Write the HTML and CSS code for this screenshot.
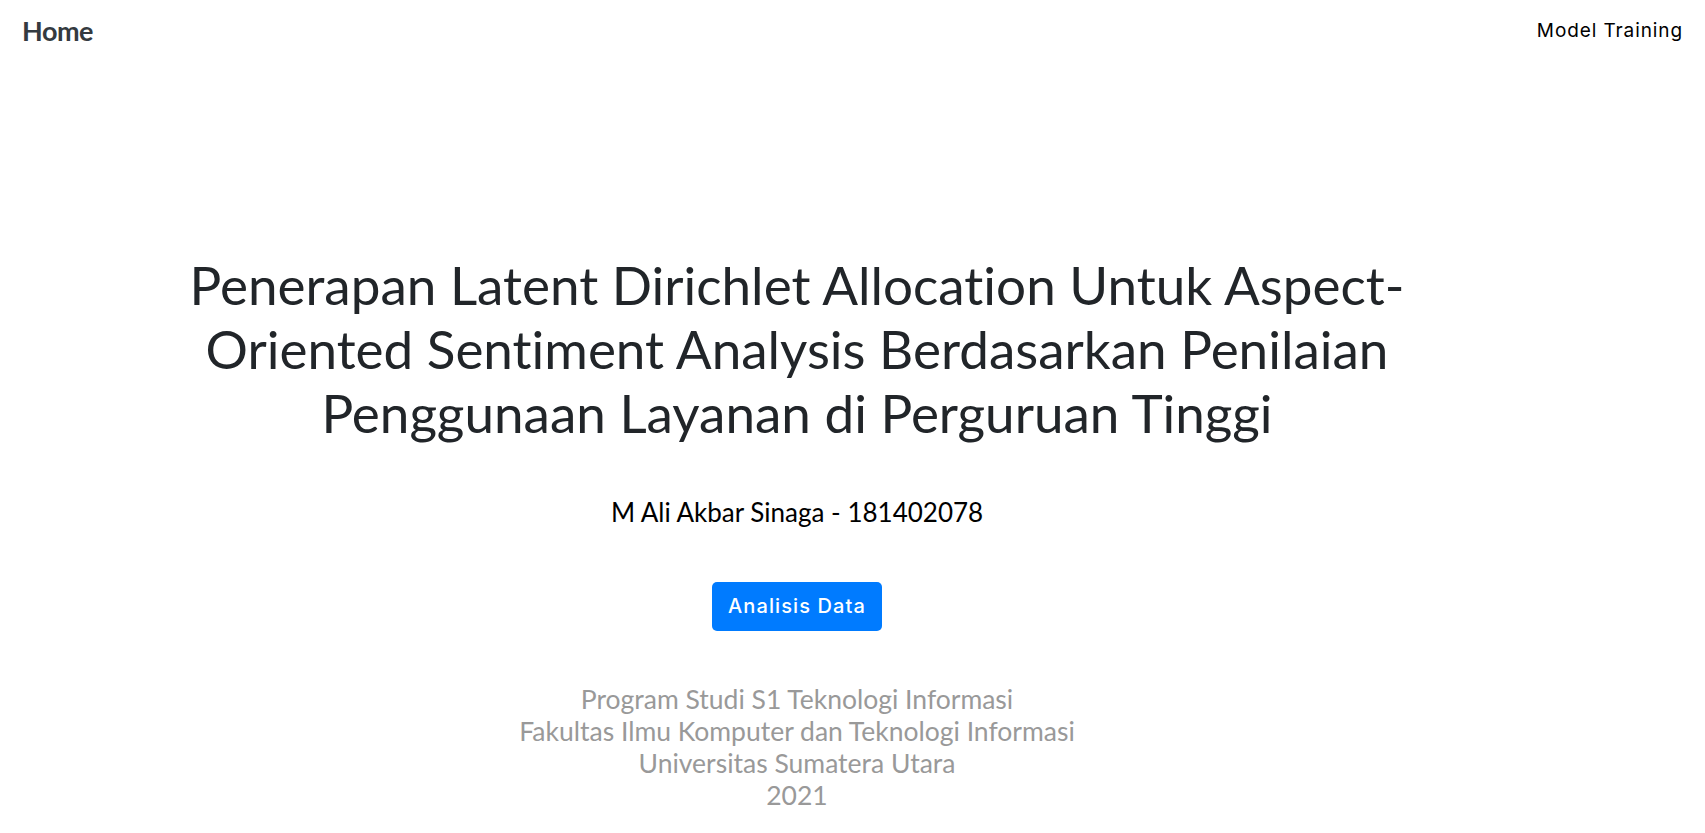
FILE: index.html
```html
<!DOCTYPE html>
<html lang="id">
<head>
<meta charset="utf-8">
<title>Home</title>
<link rel="stylesheet" href="styles.css">
</head>
<body>
<nav class="navbar">
  <a class="brand" href="#">Home</a>
  <a class="nav-link" href="#">Model Training</a>
</nav>
<main class="hero">
  <div class="hero-inner">
    <h1 class="title">Penerapan Latent Dirichlet Allocation Untuk Aspect-Oriented Sentiment Analysis Berdasarkan Penilaian Penggunaan Layanan di Perguruan Tinggi</h1>
    <p class="author">M Ali Akbar Sinaga - 181402078</p>
    <a class="btn" href="#">Analisis Data</a>
    <p class="affil">Program Studi S1 Teknologi Informasi<br>Fakultas Ilmu Komputer dan Teknologi Informasi<br>Universitas Sumatera Utara<br>2021</p>
  </div>
</main>
</body>
</html>
```
FILE: styles.css
```css
html, body { margin: 0; padding: 0; background: #fff; }
body { font-family: Lato, "Open Sans", sans-serif; color: #212529; font-variant-ligatures: none; }
a { text-decoration: none; }
.navbar {
  display: flex;
  justify-content: space-between;
  align-items: center;
  height: 60px;
  padding: 0 22px 0 22px;
}
.brand { font-family: Lato, sans-serif; font-weight: 700; font-size: 27px; color: #343a40; letter-spacing: -0.5px; }
.nav-link { font-family: Inter, sans-serif; font-size: 19px; letter-spacing: 0.9px; color: #000; }
.hero { display: flex; justify-content: center; padding-right: 111px; }
.hero-inner { width: 1280px; text-align: center; }
.title { margin: 193px 0 0; font-weight: 400; font-size: 53px; line-height: 64px; color: #212529; }
.author { margin: 53px 0 0; font-size: 26px; line-height: 29px; color: #000; }
.btn {
  display: inline-block;
  margin-top: 55px;
  background: #007bff;
  color: #fff;
  font-family: Inter, sans-serif;
  font-size: 20px;
  font-weight: 500;
  letter-spacing: 1.1px;
  line-height: 30px;
  padding: 9px 16px 10px;
  border-radius: 5px;
}
.affil { margin: 52px 0 0; font-size: 26.5px; line-height: 32px; color: #999; }
```
